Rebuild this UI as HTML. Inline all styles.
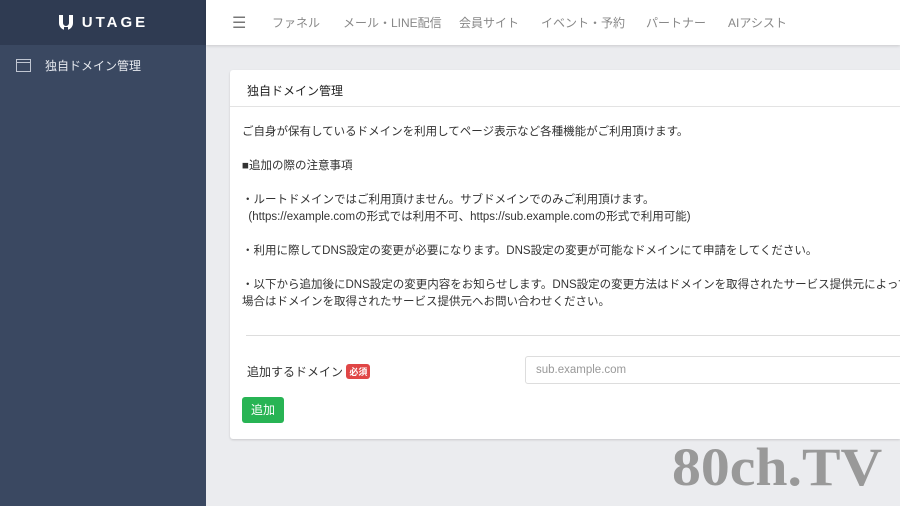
<!DOCTYPE html>
<html><head><meta charset="utf-8"><style>
*{margin:0;padding:0;box-sizing:border-box}
html,body{width:900px;height:506px;overflow:hidden}
body{background:#ebecef;font-family:"Liberation Sans","Noto Sans CJK JP",sans-serif;position:relative;color:#333}
.side{position:absolute;left:0;top:0;width:206px;height:506px;background:#3a4861}
.logo{height:45px;background:#2f3b52;display:flex;align-items:center;justify-content:center;color:#fff;font-weight:bold;letter-spacing:3px;font-size:15px}
.menu{display:flex;align-items:center;height:40px;padding-left:16px;color:#e6e9ef;font-size:12px}
.top{position:absolute;left:206px;top:0;width:694px;height:45px;background:#fff;box-shadow:0 1px 3px rgba(0,0,0,.15);font-size:12px;color:#888}
.top span{position:absolute;top:14px;white-space:nowrap}
.card{position:absolute;left:230px;top:70px;width:670px;height:369px;background:#fff;border-radius:3px 0 0 3px;box-shadow:0 1px 2px rgba(0,0,0,.15);overflow:hidden}
.hd{height:37px;border-bottom:1px solid #e3e3e3;padding:12px 0 0 17px;font-size:12px;color:#222}
.bd{padding:17px 0 0 12px;font-size:11.5px;line-height:17px;color:#333}
.bd p{margin:0;white-space:nowrap}
hr{border:0;border-top:1px solid #ddd;position:absolute;top:265px;left:16px;width:660px}
.lbl{position:absolute;left:17px;top:293px;font-size:12px}
.req{display:inline-block;background:#e04646;color:#fff;font-size:9px;font-weight:bold;padding:1px 3px;border-radius:3px;vertical-align:1px}
.inp{position:absolute;left:295px;top:286px;width:400px;height:28px;border:1px solid #ddd;border-radius:3px;padding:7px 10px;font-size:11.5px;color:#999}
.btn{position:absolute;left:12px;top:327px;width:42px;height:26px;background:#28b454;color:#fff;border-radius:3px;font-size:12px;text-align:center;line-height:26px}
.wm{position:absolute;left:672px;top:436px;font-family:"Liberation Serif",serif;font-weight:bold;font-size:54px;color:#999;transform:scaleX(1.07);transform-origin:left top;white-space:nowrap}
</style></head><body>
<div class="side">
<div class="logo"><svg width="16" height="18" viewBox="0 0 16 18" style="margin-right:8px"><path d="M1 1h4v8a3 3 0 0 0 6 0V1h4v8a7 7 0 0 1-14 0z" fill="#fff"/><rect x="6" y="13" width="4" height="5" fill="#2f3b52"/></svg>UTAGE</div>
<div class="menu"><svg width="15" height="13" style="margin-right:14px"><rect x="0.5" y="0.5" width="14" height="12" fill="none" stroke="#c0c6d2"/><line x1="0" y1="3.5" x2="15" y2="3.5" stroke="#c0c6d2"/></svg>独自ドメイン管理</div>
</div>
<div class="top"><span style="left:26px;top:13px;font-size:16px;color:#777">☰</span><span style="left:66px">ファネル</span><span style="left:137px">メール・LINE配信</span><span style="left:253px">会員サイト</span><span style="left:335px">イベント・予約</span><span style="left:440px">パートナー</span><span style="left:522px">AIアシスト</span></div>
<div class="card">
<div class="hd">独自ドメイン管理</div>
<div class="bd">
<p>ご自身が保有しているドメインを利用してページ表示など各種機能がご利用頂けます。</p><br>
<p>■追加の際の注意事項</p><br>
<p>・ルートドメインではご利用頂けません。サブドメインでのみご利用頂けます。</p>
<p>&nbsp;&nbsp;(https://example.comの形式では利用不可、https://sub.example.comの形式で利用可能)</p><br>
<p>・利用に際してDNS設定の変更が必要になります。DNS設定の変更が可能なドメインにて申請をしてください。</p><br>
<p>・以下から追加後にDNS設定の変更内容をお知らせします。DNS設定の変更方法はドメインを取得されたサービス提供元によって異なります。</p>
<p>場合はドメインを取得されたサービス提供元へお問い合わせください。</p>
</div>
<hr>
<div class="lbl">追加するドメイン <span class="req">必須</span></div>
<div class="inp">sub.example.com</div>
<div class="btn">追加</div>
</div>
<div class="wm">80ch.TV</div>
</body></html>
